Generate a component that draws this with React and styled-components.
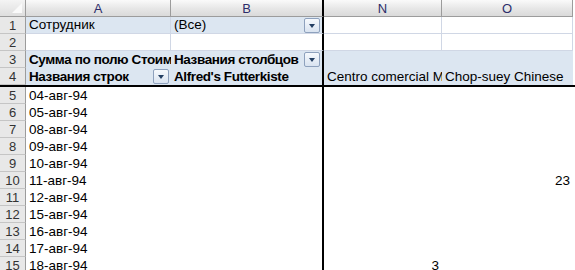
import styled, { createGlobalStyle } from "styled-components";

const Global = createGlobalStyle`
  html, body { margin: 0; padding: 0; background: #fff; }
  body { font-family: "Liberation Sans", Arial, sans-serif; overflow: hidden; }
`;

const COLS = "26px 145px 153px 118px 131px";

const Sheet = styled.div`
  width: 575px;
  height: 270px;
  overflow: hidden;
  background: #fff;
`;
const HeaderRow = styled.div`
  display: grid;
  grid-template-columns: ${COLS};
  height: 17px;
`;
const Corner = styled.div`
  position: relative;
  background: linear-gradient(#f4f4f4, #dedede);
  border-right: 1px solid #9c9c9c;
  border-bottom: 1px solid #9c9c9c;
  &::after {
    content: "";
    position: absolute;
    right: 3px;
    bottom: 3px;
    border-left: 10px solid transparent;
    border-bottom: 10px solid #fafafa;
  }
`;
const ColHead = styled.div`
  display: flex;
  align-items: center;
  justify-content: center;
  background: linear-gradient(#fafafa, #e6e6e6 55%, #dadada);
  border-right: ${(p) => (p.$freeze ? "2px solid #000" : "1px solid #9c9c9c")};
  border-bottom: 1px solid #9c9c9c;
  font-size: 13px;
  color: #2c2c6a;
`;
const Row = styled.div`
  display: grid;
  grid-template-columns: ${COLS};
  height: 17px;
  border-bottom: ${(p) => (p.$freeze ? "2px solid #000" : "none")};
`;
const RowHead = styled.div`
  display: flex;
  align-items: center;
  justify-content: center;
  background: #e8e8e8;
  border-right: 1px solid #9c9c9c;
  border-bottom: 1px solid #c5c5c5;
  font-size: 13px;
  color: #333;
`;
const Cell = styled.div`
  position: relative;
  display: flex;
  align-items: flex-end;
  justify-content: ${(p) => (p.$right ? "flex-end" : "flex-start")};
  padding: 0 3px 1px 3px;
  overflow: hidden;
  white-space: nowrap;
  font-size: 13.5px;
  font-weight: ${(p) => (p.$bold ? "bold" : "normal")};
  letter-spacing: ${(p) => (p.$bold ? "-0.4px" : "0")};
  color: #000;
  background: ${(p) => (p.$blue ? "#dce6f1" : "#fff")};
  border-right: ${(p) =>
    p.$freeze ? "2px solid #000" : p.$grid ? "1px solid #d0d7e5" : "none"};
  border-bottom: ${(p) => (p.$grid ? "1px solid #d0d7e5" : "none")};
`;
const Clip = styled.span`
  display: block;
  overflow: hidden;
  flex-shrink: 0;
  width: ${(p) => p.$w}px;
`;
const Drop = styled.span`
  position: absolute;
  right: 2px;
  top: 1px;
  width: 14px;
  height: 13px;
  border: 1px solid #8ea1bd;
  border-radius: 2px;
  background: linear-gradient(#f6f9fd, #d9e3f0);
  &::after {
    content: "";
    position: absolute;
    left: 4px;
    top: 5px;
    border-left: 3.5px solid transparent;
    border-right: 3.5px solid transparent;
    border-top: 4px solid #243f63;
  }
`;

const dates = [
  "04-авг-94",
  "05-авг-94",
  "08-авг-94",
  "09-авг-94",
  "10-авг-94",
  "11-авг-94",
  "12-авг-94",
  "15-авг-94",
  "16-авг-94",
  "17-авг-94",
  "18-авг-94",
];

const values = { 10: { o: "23" }, 15: { n: "3" } };

export default function App() {
  return (
    <Sheet>
      <Global />
      <HeaderRow>
        <Corner />
        <ColHead>A</ColHead>
        <ColHead $freeze>B</ColHead>
        <ColHead>N</ColHead>
        <ColHead>O</ColHead>
      </HeaderRow>

      <Row>
        <RowHead>1</RowHead>
        <Cell $blue $grid>Сотрудник</Cell>
        <Cell $blue $freeze style={{ borderBottom: "1px solid #d0d7e5" }}>
          (Все)
          <Drop />
        </Cell>
        <Cell $grid />
        <Cell $grid />
      </Row>

      <Row>
        <RowHead>2</RowHead>
        <Cell $grid />
        <Cell $freeze style={{ borderBottom: "1px solid #d0d7e5" }} />
        <Cell $grid />
        <Cell $grid />
      </Row>

      <Row>
        <RowHead>3</RowHead>
        <Cell $blue $bold>
          <Clip $w={142}>Сумма по полю Стоимость</Clip>
        </Cell>
        <Cell $blue $bold $freeze>
          Названия столбцов
          <Drop />
        </Cell>
        <Cell $blue />
        <Cell $blue />
      </Row>

      <Row $freeze>
        <RowHead>4</RowHead>
        <Cell $blue $bold>
          Названия строк
          <Drop />
        </Cell>
        <Cell $blue $bold $freeze>Alfred's Futterkiste</Cell>
        <Cell $blue>Centro comercial Moctezuma</Cell>
        <Cell $blue>Chop-suey Chinese</Cell>
      </Row>

      {dates.map((d, i) => {
        const n = i + 5;
        const v = values[n] || {};
        return (
          <Row key={d}>
            <RowHead>{n}</RowHead>
            <Cell>{d}</Cell>
            <Cell $freeze />
            <Cell $right>{v.n}</Cell>
            <Cell $right>{v.o}</Cell>
          </Row>
        );
      })}
    </Sheet>
  );
}
